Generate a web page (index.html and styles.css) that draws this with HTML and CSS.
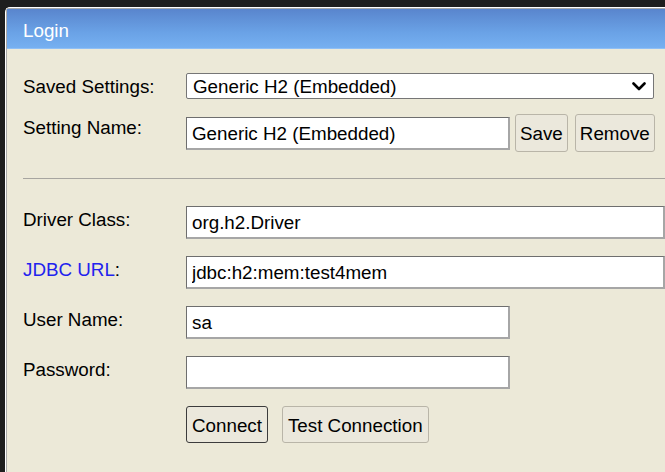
FILE: index.html
```html
<!DOCTYPE html>
<html>
<head>
<meta charset="utf-8">
<title>Login</title>
<link rel="stylesheet" href="styles.css">
</head>
<body>
<div class="window">
  <div class="inner">
    <div class="titlebar">Login</div>
    <div class="content">
      <div class="row row-saved">
        <span class="lbl lbl-top">Saved Settings:</span>
        <div class="select">
          <span>Generic H2 (Embedded)</span>
          <svg class="chev" width="14" height="9" viewBox="0 0 14 9"><path d="M1.5 1.5 L7 7 L12.5 1.5" fill="none" stroke="#000" stroke-width="2.6" stroke-linecap="round" stroke-linejoin="round"/></svg>
        </div>
      </div>
      <div class="row row-name">
        <span class="lbl lbl-top">Setting Name:</span>
        <input class="field field-short field-name" type="text" value="Generic H2 (Embedded)">
        <button class="btn btn-save">Save</button>
        <button class="btn btn-remove">Remove</button>
      </div>
      <div class="rule"></div>
      <div class="row row-first">
        <span class="lbl">Driver Class:</span>
        <input class="field field-long" type="text" value="org.h2.Driver">
      </div>
      <div class="row">
        <span class="lbl"><span class="link">JDBC URL</span>:</span>
        <input class="field field-long" type="text" value="jdbc:h2:mem:test4mem">
      </div>
      <div class="row">
        <span class="lbl">User Name:</span>
        <input class="field field-short" type="text" value="sa">
      </div>
      <div class="row">
        <span class="lbl">Password:</span>
        <input class="field field-short" type="password" value="">
      </div>
      <div class="row row-actions">
        <span class="lbl"></span>
        <button class="btn btn-connect">Connect</button>
        <button class="btn btn-test">Test Connection</button>
      </div>
    </div>
  </div>
</div>
</body>
</html>
```

FILE: styles.css
```css
html, body {
  margin: 0;
  padding: 0;
  height: 472px;
  overflow: hidden;
  background: #1e1e1e;
}

body {
  font-family: "Liberation Sans", Arial, sans-serif;
  font-size: 18.8px;
  line-height: 21px;
  color: #000;
}

.window {
  margin: 7px 0 0 5px;
  height: 465px;
  border-top: 1px solid #ffffff;
  border-left: 1px solid #ffffff;
  border-top-left-radius: 5px;
  overflow: hidden;
  box-sizing: border-box;
}

.inner {
  height: 100%;
  border-top: 1px solid #a9a9a9;
  border-left: 1px solid #a9a9a9;
  background: #ece9d8;
  box-sizing: border-box;
}

.titlebar {
  height: 40px;
  display: flex;
  align-items: center;
  padding: 3px 0 0 16px;
  color: #ffffff;
  background: linear-gradient(#5985cd, #6aa2e6 60%, #76b0f1);
  border-bottom: 1px solid #8fbff5;
  box-sizing: border-box;
}

.content {
  padding: 24px 0 0 16px;
}

.row {
  display: flex;
  align-items: flex-start;
  margin-bottom: 17px;
}

.lbl {
  width: 163px;
  flex: none;
  padding-top: 3px;
}

.lbl-top {
  padding-top: 3px;
}

.link {
  color: #2222ee;
}

.row-saved {
  margin-bottom: 15px;
}

.select {
  width: 468px;
  height: 26px;
  box-sizing: border-box;
  background: #fff;
  border: 1px solid #767676;
  border-radius: 2px;
  display: flex;
  align-items: center;
  justify-content: space-between;
  padding: 0 5px 0 6px;
}

.chev {
  display: block;
  margin-right: 2px;
}

.field {
  height: 33px;
  box-sizing: border-box;
  margin: 0;
  padding: 2px 4px 0 5px;
  font-family: "Liberation Sans", Arial, sans-serif;
  font-size: 18.8px;
  color: #000;
  background: #fff;
  border-style: solid;
  border-width: 1px 2px 2px 1px;
  border-color: #6e6e6e #a6a6a6 #a6a6a6 #6e6e6e;
  border-radius: 0;
  outline: none;
}

.field-short {
  width: 324px;
}

.field-long {
  width: 479px;
}

.field-name {
  margin-top: 3px;
}

.btn {
  margin: 0;
  height: 38px;
  padding: 2px 4px 0;
  font-family: "Liberation Sans", Arial, sans-serif;
  font-size: 18.8px;
  color: #000;
  background: #ebe8dc;
  border: 1px solid #b9b5a8;
  border-radius: 3px;
}

.btn-save {
  margin-left: 5px;
}

.btn-remove {
  margin-left: 7px;
}

.row-name {
  margin-bottom: 0;
}

.rule {
  margin-top: 26px;
  height: 1px;
  background: #a7a5a0;
  margin-bottom: 27px;
}

.row-actions .btn {
  height: 37px;
  padding: 2px 5px 0;
}

.btn-connect {
  border-color: #3c3c3c;
}

.btn-test {
  margin-left: 14px;
}
```
